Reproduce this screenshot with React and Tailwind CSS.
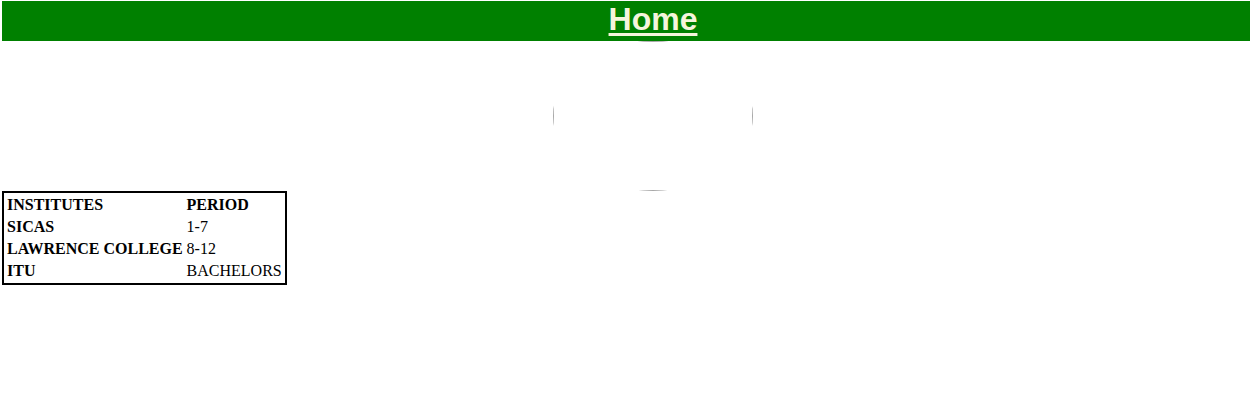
export default function App() {
  const rows = [
    ['SICAS', '1-7'],
    ['LAWRENCE COLLEGE', '8-12'],
    ['ITU', 'BACHELORS'],
  ];

  return (
    <div className="min-h-[417px] bg-white font-['Liberation_Serif',serif] text-black">
      <div className="ml-[2px] pt-[1px]">
        <div className="h-10 bg-[#008000] flex items-center justify-center pl-[54px] pb-[5px]">
          <h1 className="font-['Liberation_Sans',Arial,sans-serif] text-[32px] font-bold leading-none text-[#f5f5dc] underline underline-offset-[3px] decoration-[3px]">
            Home
          </h1>
        </div>
      </div>

      <div className="flex justify-center pl-[56px]">
        {/* broken picture, clipped to an ellipse */}
        <div className="w-[200px] h-[150px] rounded-[50%] overflow-hidden">
          <div className="w-full h-full border border-[#a8a8a8]" />
        </div>
      </div>

      <table className="ml-[2px] border-2 border-black border-separate border-spacing-[2px] text-[16px] leading-[18px]">
        <tbody>
          <tr>
            <th className="p-[1px] text-left font-bold">INSTITUTES</th>
            <th className="p-[1px] text-left font-bold">PERIOD</th>
          </tr>
          {rows.map(([name, period]) => (
            <tr key={name}>
              <th className="p-[1px] text-left font-bold">{name}</th>
              <td className="p-[1px]">{period}</td>
            </tr>
          ))}
        </tbody>
      </table>
    </div>
  );
}
